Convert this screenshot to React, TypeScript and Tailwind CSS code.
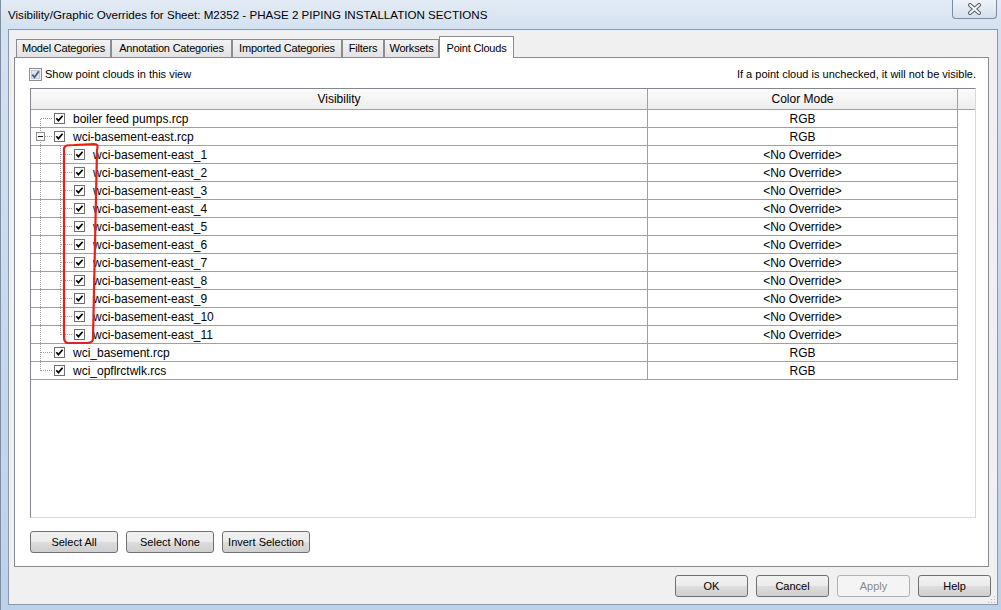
import React from 'react'

type Kind = 'first' | 'parent' | 'child' | 'lastChild' | 'root' | 'last'

const rows: { name: string; mode: string; kind: Kind }[] = [
  { name: 'boiler feed pumps.rcp', mode: 'RGB', kind: 'first' },
  { name: 'wci-basement-east.rcp', mode: 'RGB', kind: 'parent' },
  ...Array.from({ length: 11 }, (_, i) => ({
    name: `wci-basement-east_${i + 1}`,
    mode: '<No Override>',
    kind: (i === 10 ? 'lastChild' : 'child') as Kind,
  })),
  { name: 'wci_basement.rcp', mode: 'RGB', kind: 'root' },
  { name: 'wci_opflrctwlk.rcs', mode: 'RGB', kind: 'last' },
]

const tabs = [
  { label: 'Model Categories', w: 'w-[95px]' },
  { label: 'Annotation Categories', w: 'w-[121px]' },
  { label: 'Imported Categories', w: 'w-[110px]' },
  { label: 'Filters', w: 'w-[42px]' },
  { label: 'Worksets', w: 'w-[55px]' },
]

// dotted connector lines of the tree, drawn per row
function TreeGutter({ kind }: { kind: Kind }) {
  const isChild = kind === 'child' || kind === 'lastChild'
  const w = isChild ? 43 : 23
  const dot = { stroke: '#9a9a9a', strokeWidth: 1, strokeDasharray: '1 1', shapeRendering: 'crispEdges' as const }
  return (
    <svg width={w} height={17} className="shrink-0">
      {/* root-level vertical line */}
      {kind === 'first' && <line x1={9.5} y1={9} x2={9.5} y2={17} {...dot} />}
      {kind === 'last' && <line x1={9.5} y1={0} x2={9.5} y2={9} {...dot} />}
      {(kind === 'parent' || kind === 'root' || isChild) && <line x1={9.5} y1={0} x2={9.5} y2={17} {...dot} />}
      {/* child level */}
      {kind === 'child' && <line x1={29.5} y1={0} x2={29.5} y2={17} {...dot} />}
      {kind === 'lastChild' && <line x1={29.5} y1={0} x2={29.5} y2={9} {...dot} />}
      {isChild ? (
        <line x1={30} y1={8.5} x2={41} y2={8.5} {...dot} />
      ) : (
        <line x1={kind === 'parent' ? 14 : 10} y1={8.5} x2={21} y2={8.5} {...dot} />
      )}
      {kind === 'parent' && (
        <g shapeRendering="crispEdges">
          <rect x={5.5} y={4.5} width={8} height={8} fill="#f7f7f7" stroke="#8e8f8f" />
          <line x1={7} y1={8.5} x2={12} y2={8.5} stroke="#1a1a1a" />
        </g>
      )}
    </svg>
  )
}

function GridCheck() {
  return (
    <svg width={11} height={11} className="shrink-0">
      <rect x={0.5} y={0.5} width={10} height={10} fill="#fff" stroke="#6f6f6f" shapeRendering="crispEdges" />
      <path d="M2.3 5.2 L4.4 7.6 L8.6 2.8" fill="none" stroke="#000" strokeWidth={1.7} />
    </svg>
  )
}

function WinButton({ label, w, disabled }: { label: string; w: string; disabled?: boolean }) {
  return (
    <button
      className={`${w} h-[22px] rounded-[3px] border text-[11px] flex items-center justify-center ${
        disabled
          ? 'border-[#adb2b5] bg-[#f4f4f4] text-[#8a8a8a]'
          : 'border-[#707070] bg-[linear-gradient(#f2f2f2_0%,#ebebeb_50%,#dddddd_50%,#cfcfcf_100%)] text-black'
      }`}
    >
      {label}
    </button>
  )
}

export default function App() {
  return (
    <div className="w-[1001px] h-[610px] flex flex-col overflow-hidden border-l border-[#7e8ea3] bg-[linear-gradient(180deg,#e3ebf5_0%,#d4e1f0_30px,#bcd1ea_100%)] font-['Liberation_Sans',Arial,sans-serif] text-black">
      {/* title bar */}
      <div className="h-[29px] flex items-start shrink-0">
        <div className="self-center pl-[7px] text-[11.6px] text-black">
          Visibility/Graphic Overrides for Sheet: M2352 - PHASE 2 PIPING INSTALLATION SECTIONS
        </div>
        <div className="ml-auto mr-[4px] w-[45px] h-[19px] rounded-b-[4px] border border-t-0 border-[#7d8ba0] bg-[linear-gradient(#eef3f9,#d5dfeb)] flex items-center justify-center">
          <svg width={15} height={12}>
            <path d="M3 2 L12 10 M12 2 L3 10" stroke="#5a5f66" strokeWidth={4} strokeLinecap="round" />
            <path d="M3 2 L12 10 M12 2 L3 10" stroke="#f4f6f9" strokeWidth={2} strokeLinecap="round" />
          </svg>
        </div>
      </div>

      {/* client area */}
      <div className="relative ml-[7px] mr-[3px] h-[576px] border border-[#8a99ad] bg-[#f0f0f0] flex flex-col">
        {/* tabs */}
        <div className="mt-[6px] ml-[7px] h-[21px] flex items-end">
          {tabs.map((t) => (
            <div
              key={t.label}
              className={`${t.w} h-[18px] border border-b-0 border-[#898c95] bg-[linear-gradient(#f3f3f3,#e3e3e3)] text-[11px] tracking-[-0.2px] flex items-center justify-center`}
            >
              {t.label}
            </div>
          ))}
          <div className="relative z-10 w-[75px] h-[22px] -mb-px border border-b-0 border-[#898c95] bg-white text-[11px] tracking-[-0.2px] flex items-start justify-center pt-[3px]">
            Point Clouds
          </div>
        </div>

        {/* tab panel */}
        <div className="ml-[5px] w-[975px] h-[510px] border border-[#898c95] bg-white pl-[15px] pr-[12px] flex flex-col">
          <div className="mt-[8px] h-[16px] flex items-center text-[11px]">
            <svg width={13} height={13} className="shrink-0 -ml-px">
              <rect x={0.5} y={0.5} width={12} height={12} fill="#f4f4f4" stroke="#8e8f8f" shapeRendering="crispEdges" />
              <rect x={2.5} y={2.5} width={8} height={8} fill="#dfe6ef" stroke="#c4ccd8" shapeRendering="crispEdges" />
              <path d="M3.3 6.6 L5.5 9.3 L9.8 3.3" fill="none" stroke="#4a5e8c" strokeWidth={1.8} />
            </svg>
            <span className="ml-[3px]">Show point clouds in this view</span>
            <span className="ml-auto">If a point cloud is unchecked, it will not be visible.</span>
          </div>

          {/* grid */}
          <div className="relative mt-[6px] h-[430px] border border-t-[#828790] border-l-[#828790] border-r-[#d9d9d9] border-b-[#d9d9d9] text-[12px]">
            <div className="h-[21px] flex border-b border-[#a0a0a0] bg-[linear-gradient(#fbfbfb,#ededed)]">
              <div className="w-[617px] border-r border-[#a0a0a0] flex items-center justify-center">Visibility</div>
              <div className="w-[310px] border-r border-[#a0a0a0] flex items-center justify-center">Color Mode</div>
              <div className="w-[17px]" />
            </div>
            {rows.map((r) => (
              <div key={r.name} className="h-[18px] w-[927px] flex border-b border-[#a0a0a0]">
                <div className="w-[617px] border-r border-[#a0a0a0] flex items-center">
                  <TreeGutter kind={r.kind} />
                  <GridCheck />
                  <span className="ml-[8px] pt-px">{r.name}</span>
                </div>
                <div className="w-[310px] border-r border-[#a0a0a0] flex items-center justify-center pt-px">{r.mode}</div>
              </div>
            ))}

            {/* red hand-drawn markup */}
            <svg width={44} height={210} className="absolute left-[29px] top-[53px] pointer-events-none">
              <path
                d="M4 7 C4 3 8 3 14 3 L34 2 C38 2 38 4 37 8 L33 196 C33 200 31 201 27 201 L8 201 C5 201 4 199 4 195 Z"
                fill="none"
                stroke="#e2231a"
                strokeWidth={2.2}
              />
            </svg>
          </div>

          <div className="mt-[13px] flex gap-[8px]">
            <WinButton label="Select All" w="w-[88px]" />
            <WinButton label="Select None" w="w-[88px]" />
            <WinButton label="Invert Selection" w="w-[88px]" />
          </div>
        </div>

        {/* dialog buttons */}
        <div className="mt-[8px] flex justify-end gap-[8px] pr-[6px]">
          <WinButton label="OK" w="w-[73px]" />
          <WinButton label="Cancel" w="w-[73px]" />
          <WinButton label="Apply" w="w-[73px]" disabled />
          <WinButton label="Help" w="w-[73px]" />
        </div>

        {/* resize grip */}
        <svg width={8} height={8} className="absolute right-[1px] bottom-[1px]">
          <rect x={6} y={1} width={1} height={1} fill="#b8b8b8" />
          <rect x={3} y={4} width={1} height={1} fill="#b8b8b8" />
          <rect x={6} y={4} width={1} height={1} fill="#b8b8b8" />
          <rect x={0} y={7} width={1} height={1} fill="#b8b8b8" />
          <rect x={3} y={7} width={1} height={1} fill="#b8b8b8" />
          <rect x={6} y={7} width={1} height={1} fill="#b8b8b8" />
        </svg>
      </div>
    </div>
  )
}
